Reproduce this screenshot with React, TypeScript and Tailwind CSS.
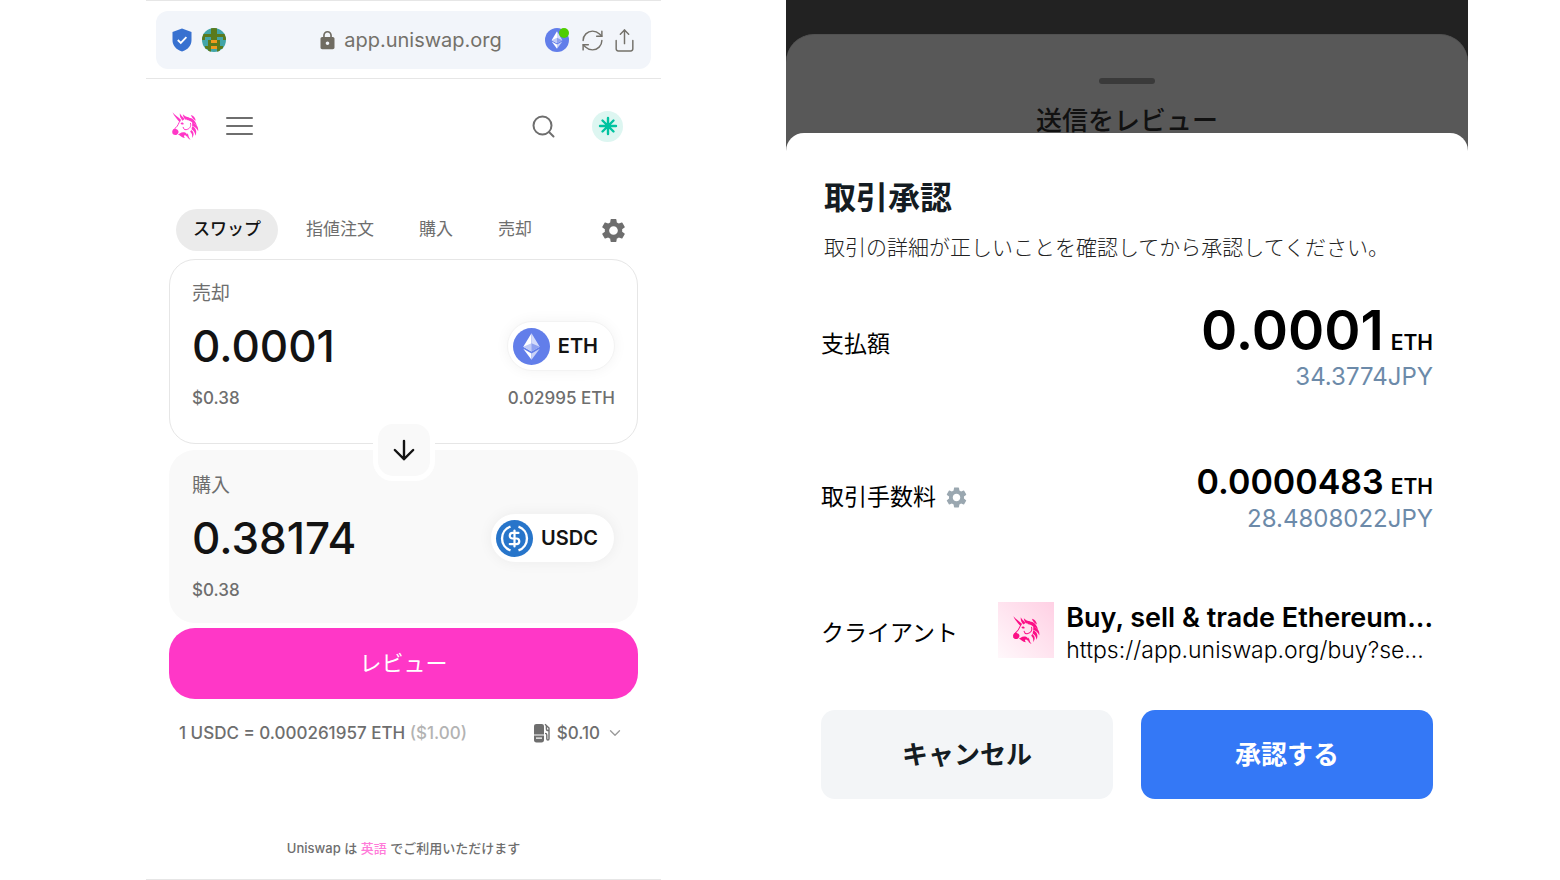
import React, { useState } from "react";
import { DollarSign, RefreshCw, Share, ChevronDown } from "lucide-react";
import { MdLock, MdSettings } from "react-icons/md";

interface IconProps {
  className?: string;
}

const Unicorn = ({ className }: IconProps) => (
  <svg viewBox="0 0 80 84" className={className} fill="currentColor" aria-hidden="true">
    {/* horn and ears */}
    <path d="M1 1 C8 9 17 15 27 24 L22 30 C14 21 6 12 1 1 Z" />
    <path d="M23 4 C27 12 32 14 37 21 L31 26 C25 19 22 13 23 4 Z" />
    <path d="M32 7 C38 13 43 15 52 17 L39 23 C35 18 33 14 32 7 Z" />
    {/* face */}
    <path
      d="M23 28 C19 33 18 41 11 47 C7 50 4 53 4 58 M55 34 C58 44 52 51 42 53 C36 54 34 50 33 46"
      fill="none"
      stroke="currentColor"
      strokeWidth="3"
      strokeLinecap="round"
    />
    <path d="M25 33 C29 30 34 31 35 36 C31 39 27 38 25 33 Z" />
    <path d="M0 59 C2 49 9 49 16 53 C21 57 20 64 14 68 C7 71 0 67 0 59 Z" />
    <path d="M17 67 C22 67 25 61 33 61 C42 61 47 67 44 74 C38 67 32 70 38 78 C29 77 24 71 17 67 Z" />
    <path d="M46 64 C50 69 48 76 55 83 C46 80 42 72 46 64 Z" />
    {/* mane */}
    <path d="M42 18 C58 14 69 23 74 40 C70 36 66 34 61 33 C57 28 51 25 43 24 Z" />
    <path d="M56 9 C65 11 69 18 71 26 C64 23 59 17 56 9 Z" />
    <path d="M60 32 C71 34 80 43 78 58 C73 47 66 43 60 42 Z" />
    <path d="M60 43 C70 47 76 57 70 71 C68 60 64 55 58 52 Z" />
    <path d="M57 54 C65 60 67 68 60 78 C61 69 59 63 54 59 Z" />
  </svg>
);

const EthLogo = ({ className }: IconProps) => (
  <svg viewBox="0 0 36 36" className={className} aria-hidden="true">
    <circle cx="18" cy="18" r="18" fill="#627eea" />
    <path d="M18 5 L10 18.3 L18 22.8 Z" fill="#fff" />
    <path d="M18 5 L26 18.3 L18 22.8 Z" fill="#d3dbfa" />
    <path d="M18 14.8 L10 18.3 L18 22.8 Z" fill="#c0cbf7" />
    <path d="M18 14.8 L26 18.3 L18 22.8 Z" fill="#8ea1f0" />
    <path d="M10 20.2 L18 24.8 V31 Z" fill="#fff" />
    <path d="M26 20.2 L18 24.8 V31 Z" fill="#c9d2f8" />
  </svg>
);

const UsdcLogo = () => (
  <span className="relative flex size-[37px] items-center justify-center rounded-full bg-[#2775ca]">
    <svg viewBox="0 0 37 37" className="absolute inset-0" fill="none" stroke="#fff" strokeWidth="2.4" aria-hidden="true">
      <path d="M14.5 6.6 A12.6 12.6 0 0 0 14.5 30.4 M22.5 6.6 A12.6 12.6 0 0 1 22.5 30.4" />
    </svg>
    <DollarSign size={19} strokeWidth={2.8} color="#fff" />
  </span>
);

const ShieldIcon = () => (
  <svg width="20" height="24" viewBox="0 0 20 24" aria-hidden="true">
    <path d="M10 0.5 L19.5 4 V12 C19.5 18 15.5 21.8 10 23.5 C4.5 21.8 0.5 18 0.5 12 V4 Z" fill="#3871d0" />
    <path d="M5.8 12 L8.8 15 L14.4 9.2" fill="none" stroke="#fff" strokeWidth="1.8" />
  </svg>
);

const Identicon = () => (
  <svg width="24" height="24" viewBox="0 0 8 8" className="rounded-full" shapeRendering="crispEdges" aria-hidden="true">
    <rect width="8" height="8" fill="#42a5a8" />
    <path
      d="M3 0h2v1h-2z M3 1h2v1h-2z M0 2h8v1h-8z M0 3h1v1h-1z M3 3h2v1h-2z M7 3h1v1h-1z M2 4h1v1h-1z M5 4h1v1h-1z M2 5h4v1h-4z M1 6h2v1h-2z M5 6h2v1h-2z M2 7h1v1h-1z M5 7h1v1h-1z"
      fill="#5a7a1c"
    />
    <path d="M3 4h2v1h-2z M3 6h2v1h-2z" fill="#f09a1c" />
  </svg>
);

const GasIcon = () => (
  <svg width="18" height="20" viewBox="0 0 18 20" aria-hidden="true">
    <path d="M1 3.5 C1 1.8 1.8 1 3.5 1 H8.5 C10.2 1 11 1.8 11 3.5 V11.4 H1 Z" fill="#6e6e6e" />
    <path
      fillRule="evenodd"
      d="M1 12.6 H11 V17 C11 18.4 10.2 19.4 8.5 19.4 H3.5 C1.8 19.4 1 18.4 1 17 Z M3 14.6 V15.8 H9 V14.6 Z"
      fill="#6e6e6e"
    />
    <path
      d="M12 1.2 L16 5 V15.8 C16 17.4 13.8 17.4 13.8 15.8 V12 C13.8 11 13 10.4 12 10.4 M13.4 3 V6 C13.4 7.2 14.2 7.8 16 7.8"
      fill="none"
      stroke="#6e6e6e"
      strokeWidth="1.4"
    />
  </svg>
);

const tabs = ["スワップ", "指値注文", "購入", "売却"];

interface TokenFieldProps {
  id: string;
  label: string;
  value: string;
  fiat: string;
  token: string;
  logo: React.ReactNode;
  balance?: string;
  className: string;
}

const TokenField = ({ id, label, value, fiat, token, logo, balance, className }: TokenFieldProps) => {
  const [amount, setAmount] = useState(value);

  return (
    <div className={`rounded-[26px] ${className}`}>
      <label htmlFor={id} className="block text-[19px] leading-6 text-[#6e6e6e]">
        {label}
      </label>
      <div className="mt-[15px] flex h-[50px] items-center justify-between">
        <input
          id={id}
          value={amount}
          onChange={(e) => setAmount(e.target.value)}
          className="w-full min-w-0 flex-1 bg-transparent text-[44px] leading-[50px] font-medium text-[#131313] outline-none"
        />
        <button className="flex h-[50px] shrink-0 items-center gap-2 rounded-full border border-[#f3f3f3] bg-white pr-4 pl-[5px] text-xl font-semibold text-[#131313] shadow-[0_0_14px_rgba(0,0,0,0.05)]">
          {logo}
          {token}
        </button>
      </div>
      <div className="mt-[15px] flex justify-between text-[17px] leading-6 font-medium text-[#6e6e6e]">
        <span>{fiat}</span>
        {balance && <span>{balance}</span>}
      </div>
    </div>
  );
};

const SwapPanel = () => {
  const [activeTab, setActiveTab] = useState(tabs[0]);

  return (
    <section className="flex min-w-0 flex-[515] flex-col border-y border-[#e6e6e6]">
      {/* Browser bar */}
      <div className="border-b border-[#e6e6e6] px-[10px] pt-[10px] pb-[9px]">
        <div className="flex h-[58px] items-center justify-between rounded-xl bg-[#f2f5fa] px-4">
          <div className="flex w-[108px] items-center gap-[10px]">
            <ShieldIcon />
            <Identicon />
          </div>
          <div className="flex items-center gap-[6px] text-xl text-[#74716a]">
            <MdLock size={21} color="#706c62" />
            app.uniswap.org
          </div>
          <div className="flex w-[96px] items-center justify-end gap-[7px] text-[#74716a]">
            <button aria-label="Ethereum" className="relative mr-1">
              <EthLogo className="size-6" />
              <span className="absolute top-0 right-0 size-[10px] rounded-full bg-[#4fce00]" />
            </button>
            <button aria-label="再読み込み">
              <RefreshCw size={25} strokeWidth={1.4} />
            </button>
            <button aria-label="共有" className="-mr-0.5">
              <Share size={25} strokeWidth={1.4} />
            </button>
          </div>
        </div>
      </div>

      {/* Header */}
      <header className="flex h-[94px] items-center justify-between pr-[38px] pl-[26px]">
        <div className="flex items-center gap-[27px]">
          <a href="#" aria-label="Uniswap">
            <Unicorn className="h-7 w-[27px] text-[#ff37c7]" />
          </a>
          <button aria-label="メニュー" className="flex flex-col gap-[6px]">
            <span className="h-[2px] w-[27px] rounded bg-[#6e6e6e]" />
            <span className="h-[2px] w-[27px] rounded bg-[#6e6e6e]" />
            <span className="h-[2px] w-[27px] rounded bg-[#6e6e6e]" />
          </button>
        </div>
        <div className="flex items-center gap-[37px]">
          <button aria-label="検索">
            <svg width="23" height="23" viewBox="0 0 23 23" fill="none" stroke="#6e6e6e" strokeWidth="2" strokeLinecap="round">
              <circle cx="10.5" cy="10.5" r="9" />
              <path d="M17 17 L21.5 21.5" />
            </svg>
          </button>
          <button aria-label="アカウント" className="flex size-[31px] items-center justify-center rounded-full bg-[#ddf6f1]">
            <svg width="20" height="20" viewBox="0 0 20 20" stroke="#00c3a0" strokeWidth="2.4" strokeLinecap="round">
              <path d="M10 2 V18 M2 10 H18 M4.5 4.5 L15.5 15.5 M15.5 4.5 L4.5 15.5" />
            </svg>
          </button>
        </div>
      </header>

      {/* Swap form */}
      <div className="flex flex-1 flex-col px-[23px] pt-9">
        <div className="mb-2 flex items-center justify-between pr-[10px] pl-[7px]">
          <div className="flex items-center gap-[11px]">
            {tabs.map((tab) => (
              <button
                key={tab}
                onClick={() => setActiveTab(tab)}
                className={`h-[42px] rounded-full px-[17px] text-[17px] ${
                  tab === activeTab ? "bg-[#ebebeb] font-medium text-[#131313]" : "text-[#6e6e6e]"
                }`}
              >
                {tab}
              </button>
            ))}
          </div>
          <button aria-label="設定">
            <MdSettings size={29} color="#6e6e6e" />
          </button>
        </div>

        <TokenField
          id="sell"
          label="売却"
          value="0.0001"
          fiat="$0.38"
          token="ETH"
          balance="0.02995 ETH"
          logo={<EthLogo className="size-[37px]" />}
          className="border border-[#e6e6e6] px-[22px] pt-[22px] pb-[33px]"
        />
        <button
          aria-label="切り替え"
          className="z-10 -mt-[25px] -mb-[31px] flex size-[62px] items-center justify-center self-center rounded-[20px] border-[5px] border-white bg-[#f9f9f9]"
        >
          <svg width="22" height="22" viewBox="0 0 24 24" fill="none" stroke="#131313" strokeWidth="2.6" strokeLinecap="round" strokeLinejoin="round">
            <path d="M12 2 V22 M2 12 L12 22 L22 12" />
          </svg>
        </button>
        <TokenField
          id="buy"
          label="購入"
          value="0.38174"
          fiat="$0.38"
          token="USDC"
          logo={<UsdcLogo />}
          className="bg-[#f9f9f9] px-[23px] pt-6 pb-[21px]"
        />

        <button className="mt-[5px] h-[71px] rounded-[26px] bg-[#ff37c7] text-[22px] text-white">レビュー</button>

        <div className="mt-[22px] flex items-center justify-between pr-[14px] pl-[10px] text-[17px] leading-6 font-medium text-[#6e6e6e]">
          <span>
            1 USDC = 0.000261957 ETH <span className="text-[#b3b3b3]">($1.00)</span>
          </span>
          <button className="flex items-center gap-[6px]">
            <GasIcon />
            $0.10
            <ChevronDown size={18} strokeWidth={1.8} color="#9b9b9b" />
          </button>
        </div>

        <p className="mt-auto mb-[21px] text-center text-[13px] leading-5 font-medium text-[#6e6e6e]">
          Uniswap は{" "}
          <a href="#" className="text-[#ff7bd9]">
            英語
          </a>{" "}
          でご利用いただけます
        </p>
      </div>
    </section>
  );
};

interface AmountProps {
  value: string;
  fiat: string;
  large?: boolean;
}

const Amount = ({ value, fiat, large }: AmountProps) => (
  <dd className="text-right">
    <div className="flex items-baseline justify-end gap-[7px] font-semibold">
      <span className={large ? "text-[55px] leading-[62px]" : "text-[34px] leading-9"}>{value}</span>
      <span className="text-[21px]">ETH</span>
    </div>
    <div className="text-2xl leading-8 text-[#6c8aa9]">{fiat}</div>
  </dd>
);

const ConfirmPanel = () => (
  <section className="flex min-w-0 flex-[682] flex-col bg-[#222222] pt-[34px]">
    <div className="flex flex-1 flex-col rounded-t-[28px] border-t border-[#515151] bg-[#585858]">
      <div className="pt-[43px] text-center">
        <div className="mx-auto h-[6px] w-[56px] rounded-full bg-[#3a3a3a]" />
        <h2 className="mt-6 text-[26px] leading-[25px] font-medium text-[#111]">送信をレビュー</h2>
      </div>
      <div className="relative flex-1 rounded-t-[18px] bg-white px-[35px] pt-[45px]">
        <h1 className="pl-[3px] text-[32px] leading-10 font-bold text-[#141c22]">取引承認</h1>
        <p className="mt-[14px] pl-[3px] text-[21px] leading-8 font-light text-[#222]">
          取引の詳細が正しいことを確認してから承認してください。
        </p>
        <dl className="text-[23px] text-black">
          <div className="mt-[35px] flex items-center justify-between">
            <dt className="pb-1">支払額</dt>
            <Amount value="0.0001" fiat="34.3774JPY" large />
          </div>
          <div className="mt-[71px] flex items-center justify-between">
            <dt className="flex items-center gap-2 pb-1">
              取引手数料
              <button aria-label="手数料の設定">
                <MdSettings size={25} color="#9aa7b0" />
              </button>
            </dt>
            <Amount value="0.0000483" fiat="28.4808022JPY" />
          </div>
          <div className="mt-[67px] flex items-center justify-between">
            <dt>クライアント</dt>
            <dd className="flex items-start gap-3">
              <span className="flex size-[56px] items-center justify-center bg-linear-to-bl from-[#ffd0e4] to-[#fff8fb]">
                <Unicorn className="h-[30px] w-[27px] text-[#fc0f86]" />
              </span>
              <span className="whitespace-nowrap">
                <span className="block text-[27px] leading-8 font-semibold">Buy, sell &amp; trade Ethereum...</span>
                <a href="#" className="block text-[23px] leading-8 font-light">
                  https://app.uniswap.org/buy?se...
                </a>
              </span>
            </dd>
          </div>
        </dl>
        <div className="mt-11 flex gap-7 text-[26px] font-bold">
          <button className="h-[89px] flex-1 rounded-[14px] bg-[#f3f5f7] text-[#141c22]">キャンセル</button>
          <button className="h-[89px] flex-1 rounded-[14px] bg-[#3478f6] text-white">承認する</button>
        </div>
      </div>
    </div>
  </section>
);

const App = () => (
  <main className="flex min-h-screen gap-[125px] bg-white pr-[92px] pl-[146px] font-['Inter','Noto_Sans_CJK_JP',sans-serif]">
    <SwapPanel />
    <ConfirmPanel />
  </main>
);

export default App;
